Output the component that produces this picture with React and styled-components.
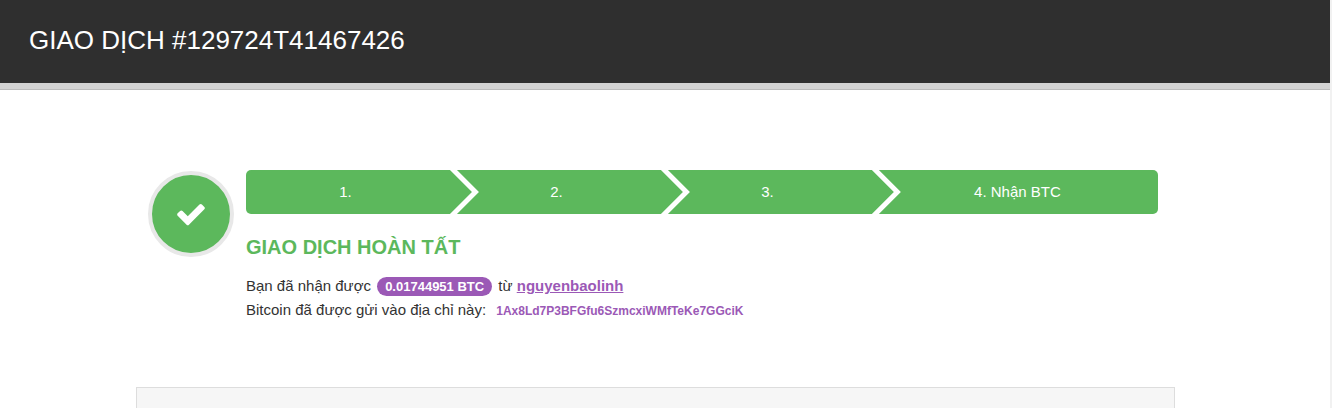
import React from "react";
import styled, { createGlobalStyle } from "styled-components";

const steps = ["1.", "2.", "3.", "4. Nhận BTC"];

const CheckIcon = () => (
  <svg width="32" height="32" viewBox="0 0 1792 1792" fill="currentColor" aria-hidden="true">
    <path d="M1671 566q0 40-28 68l-724 724-136 136q-28 28-68 28t-68-28l-136-136-362-362q-28-28-28-68t28-68l136-136q28-28 68-28t68 28l294 295 656-657q28-28 68-28t68 28l136 136q28 28 28 68z" />
  </svg>
);

const App = () => {
  return (
    <Page>
      <GlobalStyle />
      <Header>
        <Title>GIAO DỊCH #129724T41467426</Title>
      </Header>

      <Main>
        <Status>
          <StatusIcon>
            <CheckIcon />
          </StatusIcon>
          <StatusBody>
            <StepList>
              {steps.map((step) => (
                <Step key={step}>{step}</Step>
              ))}
            </StepList>
            <StatusTitle>GIAO DỊCH HOÀN TẤT</StatusTitle>
            <Line>
              Bạn đã nhận được <Badge>0.01744951 BTC</Badge> từ{" "}
              <UserLink href="#nguyenbaolinh">nguyenbaolinh</UserLink>
            </Line>
            <Line>
              Bitcoin đã được gửi vào địa chỉ này:{" "}
              <Address>1Ax8Ld7P3BFGfu6SzmcxiWMfTeKe7GGciK</Address>
            </Line>
          </StatusBody>
        </Status>
        <Panel />
      </Main>
    </Page>
  );
};

// Styled Components
const GlobalStyle = createGlobalStyle`
  *, *::before, *::after {
    box-sizing: border-box;
  }

  body {
    margin: 0;
    background: #fff;
    color: #333;
    font-family: "Liberation Sans", Arial, sans-serif;
    font-size: 15px;
    line-height: 24px;
  }
`;

const Page = styled.div`
  display: flex;
  flex-direction: column;
  min-height: 100vh;
  border-right: 2px solid #f1f1f1;
`;

const Header = styled.header`
  padding: 24px 29px 34px;
  background: #2f2f2f;
  box-shadow: inset 0 -1px 0 #bbb, inset 0 -7px 0 #d2d2d2;
`;

const Title = styled.h1`
  margin: 0;
  color: #fff;
  font-size: 26px;
  font-weight: 400;
  line-height: 32px;
`;

const Main = styled.main`
  flex: 1;
  display: flex;
  flex-direction: column;
  padding: 80px 155px 0 136px;
`;

const Status = styled.section`
  display: flex;
  align-items: flex-start;
  gap: 12px;
  padding: 0 17px 0 12px;
`;

const StatusIcon = styled.div`
  flex: none;
  display: flex;
  align-items: center;
  justify-content: center;
  width: 86px;
  height: 86px;
  margin-top: 1px;
  border: 4px solid #e8e8e8;
  border-radius: 50%;
  background: #5cb85c;
  color: #fff;
`;

const StatusBody = styled.div`
  flex: 1;
`;

const StepList = styled.ol`
  display: flex;
  margin: 0;
  padding: 0;
  border-radius: 5px;
  background: #5cb85c;
  list-style: none;
`;

const Step = styled.li`
  position: relative;
  flex: 1 1 auto;
  padding: 0 12px 0 0;
  color: #fff;
  line-height: 44px;
  text-align: center;

  &:last-child {
    padding: 0 4px 0 2px;
  }

  &:not(:last-child)::after {
    content: "";
    position: absolute;
    top: 0;
    right: -22px;
    width: 29px;
    height: 44px;
    background: #fff;
    clip-path: polygon(0 0, 7px 0, 100% 50%, 7px 100%, 0 100%, 22px 50%);
  }
`;

const StatusTitle = styled.h2`
  margin: 21px 0 15px;
  color: #5cb85c;
  font-size: 20px;
  font-weight: 700;
  line-height: 24px;
`;

const Line = styled.p`
  margin: 0;
`;

const Badge = styled.span`
  display: inline-block;
  margin: 0 2px;
  padding: 0 8px;
  border-radius: 10px;
  background: #9b59b6;
  color: #fff;
  font-size: 13px;
  font-weight: 700;
  line-height: 19px;
`;

const UserLink = styled.a`
  color: #9b59b6;
  font-weight: 700;
`;

const Address = styled.strong`
  margin-left: 6px;
  color: #9b59b6;
  font-size: 12px;
`;

const Panel = styled.section`
  flex: 1;
  min-height: 21px;
  margin-top: 64px;
  border: 1px solid #ddd;
  border-bottom: 0;
  background: #f6f6f6;
`;

export default App;
